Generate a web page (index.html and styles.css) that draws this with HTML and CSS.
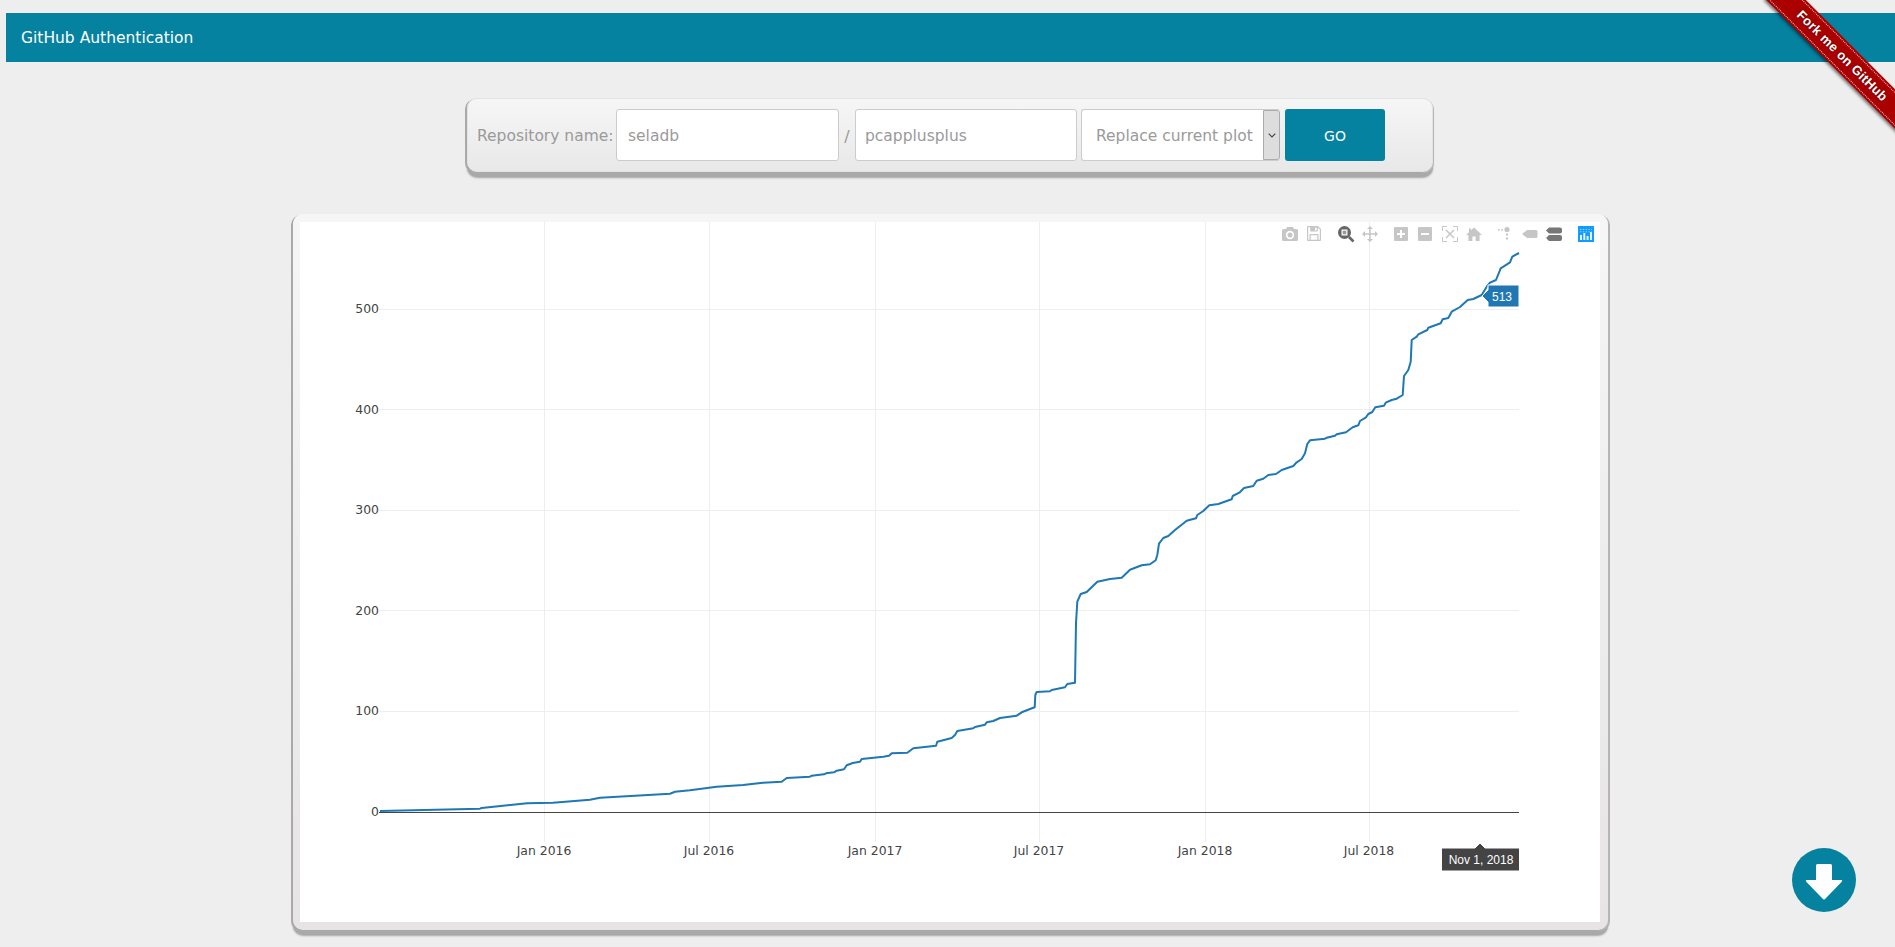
FILE: index.html
```html
<!DOCTYPE html>
<html lang="en">
<head>
<meta charset="utf-8">
<title>GitHub Authentication</title>
<link rel="stylesheet" href="styles.css">
</head>
<body>
<header class="topbar"><a class="topbar-link">GitHub Authentication</a></header>

<div class="ribbon-clip"><a class="ribbon"><span class="ribbon-text">Fork me on GitHub</span></a></div>

<section class="search-row">
  <form class="search-panel">
    <label class="repo-label">Repository name:</label>
    <input class="field field-owner" type="text" value="seladb">
    <span class="slash">/</span>
    <input class="field field-repo" type="text" value="pcapplusplus">
    <div class="picker">
      <span class="picker-text">Replace current plot</span>
      <span class="picker-arrow">
        <svg class="chevron" viewBox="0 0 8 5" width="8" height="5"><path d="M0.7 0.7 L4 4 L7.3 0.7" fill="none" stroke="#444" stroke-width="1.2"/></svg>
      </span>
    </div>
    <button class="go" type="button">GO</button>
  </form>
</section>

<section class="plot-row">
  <div class="plot-card">
    <svg class="plot" viewBox="300 222 1300 700" width="1300" height="700">
      <g class="grid">
        <path d="M544.5 222V842M709.5 222V842M875.5 222V842M1039.5 222V842M1205.5 222V842M1369.5 222V842"/>
        <path d="M379 309.5H1519M379 409.5H1519M379 510.5H1519M379 610.5H1519M379 711.5H1519"/>
      </g>
      <path class="zero" d="M379 812.5H1519"/>
      <g class="ytick">
        <text x="379" y="313">500</text>
        <text x="379" y="414">400</text>
        <text x="379" y="514">300</text>
        <text x="379" y="615">200</text>
        <text x="379" y="715">100</text>
        <text x="379" y="816">0</text>
      </g>
      <g class="xtick">
        <text x="544" y="855">Jan 2016</text>
        <text x="709" y="855">Jul 2016</text>
        <text x="875" y="855">Jan 2017</text>
        <text x="1039" y="855">Jul 2017</text>
        <text x="1205" y="855">Jan 2018</text>
        <text x="1369" y="855">Jul 2018</text>
      </g>
      <polyline class="trace" points="380,811 480,808.7 481.7,808 503,805.7 527,803.3 553,802.7 590,799.7 600,797.7 670,793.7 675,791.7 690,790.3 716.7,786.7 743,785 763,782.7 781.7,781.7 786.7,778 810,776.7 811.7,775.7 824,774.3 826,773.3 834,772.3 836.7,770.7 844,769.3 846.7,765.3 852.7,763 860,761.7 861.7,759 883.3,756.7 889,755.7 891.7,753.3 907.3,752.7 913.3,748.3 936,745.7 937.3,741.7 951.7,738 955,735 957.3,731 973.3,728.3 975,727 985,724.7 986.7,722.3 993.3,721 1000,718 1016.7,715.7 1021.7,712.3 1033.3,707.7 1034.7,707.3 1035.3,695 1036.7,692 1050,691.3 1051.7,690 1065,687.3 1067.3,684 1075,682.7 1076,623.3 1077.3,601.7 1080.7,594 1086.7,592 1097.3,581.7 1110,579 1121.7,577.7 1130,569.7 1141.7,565.3 1150,564.3 1155.7,560.3 1157.3,555 1159,543.7 1163.3,538 1168.3,536 1175,530 1186.7,520.7 1196,518.3 1197.3,515 1203.3,511 1209.3,505.3 1218.3,504 1226,501.3 1231.7,499.3 1232.7,496 1239.3,492.7 1244,488 1253.3,486 1256.7,480.7 1263.3,478.7 1268.3,475 1276,474 1281.7,470 1293.3,466 1296.7,462.3 1301.7,459 1305,453.3 1307.3,444 1310,440.3 1325,438.7 1326.7,437.7 1335,435.7 1336.7,434.3 1346,432.3 1352.7,427.3 1358.3,425.3 1360,421 1366,417.3 1368.3,414 1372.3,412 1375.3,407.3 1384,405.7 1385.7,402.7 1391.7,400 1396.7,398.7 1402.7,395 1404,376 1408.3,370 1410.7,361.7 1411.7,340 1416.7,336.7 1418.3,334.3 1427.3,330 1428.3,327.7 1440.7,323.3 1442.7,319.3 1448.3,318 1451.7,311.7 1460,307 1467.7,300 1473.3,299 1481.7,295 1486.7,286.7 1490,282.7 1496,280 1500.7,268.3 1510,262.3 1512.3,256.7 1519,253"/>

      <g class="hover">
        <path class="hover-y" d="M1482 296L1488 290V285H1519V307H1488V302Z"/>
        <text class="hover-text" x="1502" y="301">513</text>
        <path class="hover-x" d="M1480 843L1485 848H1519.5V871H1441.5V848H1475Z"/>
        <text class="hover-text" x="1481" y="864">Nov 1, 2018</text>
      </g>

      <g class="modebar">
        <path transform="translate(1282 227)" fill-rule="evenodd" d="M0 3.5A1.5 1.5 0 0 1 1.5 2H4L5 0H11L12 2H14.5A1.5 1.5 0 0 1 16 3.5V12.5A1.5 1.5 0 0 1 14.5 14H1.5A1.5 1.5 0 0 1 0 12.5ZM8 3.8A4.2 4.2 0 1 0 8 12.2A4.2 4.2 0 1 0 8 3.8ZM8 5.5A2.5 2.5 0 1 1 8 10.5A2.5 2.5 0 1 1 8 5.5Z"/>
        <path transform="translate(1307 226)" fill-rule="evenodd" d="M1 0H11L14 3V14A1 1 0 0 1 13 15H1A1 1 0 0 1 0 14V1A1 1 0 0 1 1 0ZM1.2 1.2V13.8H2.5V8H11.5V13.8H12.8V3.6L10.8 1.4V5.6H3.2V1.2ZM8 1.8V4.6H9.6V1.8ZM3.7 9.2V13.8H10.3V9.2Z"/>
        <g class="mode-active">
          <path transform="translate(1338 226)" fill-rule="evenodd" d="M6.5 0A6.5 6.5 0 1 1 6.5 13A6.5 6.5 0 1 1 6.5 0ZM3.5 3.5V9.5H9.5V3.5Z"/>
          <rect x="1342.7" y="230.7" width="3.6" height="3.6" class="mode-inner"/>
          <path class="mode-handle" d="M1349 237L1353.5 241.5"/>
        </g>
        <path transform="translate(1362 226)" d="M7.25 3H8.75V7.25H13V5L16 8L13 11V8.75H8.75V13H11L8 16L5 13H7.25V8.75H3V11L0 8L3 5V7.25H7.25V3H5L8 0L11 3H7.25Z"/>
        <path transform="translate(1394 227)" fill-rule="evenodd" d="M1 0H13A1 1 0 0 1 14 1V13A1 1 0 0 1 13 14H1A1 1 0 0 1 0 13V1A1 1 0 0 1 1 0ZM6 3V6H3V8H6V11H8V8H11V6H8V3Z"/>
        <path transform="translate(1418 227)" fill-rule="evenodd" d="M1 0H13A1 1 0 0 1 14 1V13A1 1 0 0 1 13 14H1A1 1 0 0 1 0 13V1A1 1 0 0 1 1 0ZM3 6V8H11V6Z"/>
        <g class="mode-auto" transform="translate(1442 226)">
          <path d="M.5 5V.5H5M11 .5H15.5V5M15.5 11V15.5H11M5 15.5H.5V11"/>
          <path class="mode-auto-x" d="M4 4L12 12M12 4L4 12"/>
        </g>
        <path transform="translate(1466 227)" d="M8 .5L16 8H13.6V14H9.6V9.5H6.4V14H2.4V8H0L3 5.2V1.5H5V3.3Z"/>
        <g transform="translate(1498 226)">
          <circle cx="9" cy="3.5" r="2.6"/>
          <rect x="0" y="3" width="1.6" height="1.6"/>
          <rect x="3.2" y="3" width="1.6" height="1.6"/>
          <rect x="8" y="7.5" width="2" height="2"/>
          <rect x="8" y="11.5" width="2" height="2"/>
        </g>
        <path transform="translate(1522 230)" d="M0 4L5 0H14A1.5 1.5 0 0 1 15.5 1.5V6.5A1.5 1.5 0 0 1 14 8H5Z"/>
        <path class="mode-dark" transform="translate(1546 227.5)" d="M3 0H14A2 2 0 0 1 16 2V4A2 2 0 0 1 14 6H3L0 3ZM3 7.5H14A2 2 0 0 1 16 9.5V11.5A2 2 0 0 1 14 13.5H3L0 10.5Z"/>
        <g transform="translate(1578 226)">
          <rect class="logo-bg" width="16" height="16"/>
          <path class="logo-bars" d="M2 9h2v5H2ZM5.3 7h2v7h-2ZM8.6 10h2v4h-2ZM12 6h2v8h-2Z"/>
          <path class="logo-dots" d="M2 3.5H14M2 5.8H14"/>
        </g>
      </g>
    </svg>
  </div>
</section>

<a class="scroll-down">
  <svg viewBox="0 0 64 64" width="64" height="64">
    <circle cx="32" cy="32" r="32" fill="#04829f"/>
    <path fill="#fff" d="M25.5 16H38.5A1.5 1.5 0 0 1 40 17.5V32H49.5A1 1 0 0 1 50 33.5L32.8 51.2A1.2 1.2 0 0 1 31.2 51.2L14 33.5A1 1 0 0 1 14.5 32H24V17.5A1.5 1.5 0 0 1 25.5 16Z"/>
  </svg>
</a>
</body>
</html>
```
FILE: styles.css
```css
* { box-sizing: border-box; }

html, body {
  margin: 0;
  height: 947px;
  overflow: hidden;
}

body {
  padding: 13px 0 0 6px;
  background: #eeeeee;
  font-family: "DejaVu Sans", "Noto Sans", sans-serif;
}

.topbar {
  display: flex;
  align-items: center;
  height: 49px;
  padding-left: 15px;
  background: #04829f;
}

.topbar-link {
  color: #ffffff;
  font-size: 15.5px;
}

.ribbon-clip {
  position: absolute;
  top: 0;
  right: 0;
  width: 150px;
  height: 150px;
  overflow: hidden;
}

.ribbon {
  position: absolute;
  left: 2px;
  top: 42px;
  width: 190px;
  height: 28px;
  padding: 2px 0;
  background: #aa0000;
  transform: rotate(45deg);
  box-shadow: 0 2px 3px rgba(0, 0, 0, 0.5);
}

.ribbon-text {
  display: block;
  height: 24px;
  text-align: center;
  color: #ffffff;
  font: bold 13px/22px "Liberation Sans", Arial, sans-serif;
  letter-spacing: 0.3px;
  border-top: 1px dotted rgba(255, 255, 255, 0.8);
  border-bottom: 1px dotted rgba(255, 255, 255, 0.8);
  text-shadow: 0 0 2px rgba(0, 0, 0, 0.6);
}

.search-row {
  display: flex;
  justify-content: center;
  margin-top: 36px;
  padding-right: 1px;
}

.search-panel {
  display: flex;
  align-items: center;
  width: 966px;
  height: 74px;
  padding: 0 9px;
  border: 1px solid #e2e2e2;
  border-radius: 10px;
  background: linear-gradient(#f6f6f6, #e8e8e8);
  box-shadow: -2px 1px 0 #a9a9a9, 1px 1px 0 #b8b8b8, 0 5px 0 #a9a9a9, 0 6px 2px rgba(0, 0, 0, 0.3);
}

.repo-label {
  width: 139px;
  flex: none;
  padding-top: 2px;
  font-size: 15.5px;
  white-space: nowrap;
  color: #9a9a9a;
}

.field {
  flex: none;
  height: 52px;
  padding-top: 2px;
  border: 1px solid #cccccc;
  border-radius: 3px;
  background: #ffffff;
  color: #9a9a9a;
  font: 15.5px "DejaVu Sans", "Noto Sans", sans-serif;
  outline: none;
}

.field-owner {
  width: 223px;
  padding-left: 11px;
}

.field-repo {
  width: 222px;
  padding-left: 9px;
}

.slash {
  width: 16px;
  flex: none;
  padding-top: 2px;
  text-align: center;
  font-size: 16px;
  color: #9a9a9a;
}

.picker {
  display: flex;
  flex: none;
  width: 199px;
  height: 52px;
  margin-left: 4px;
  border: 1px solid #cccccc;
  border-right: none;
  border-radius: 3px;
  background: #ffffff;
}

.picker-text {
  flex: 1;
  padding-left: 14px;
  line-height: 52px;
  font-size: 15.5px;
  white-space: nowrap;
  color: #9a9a9a;
}

.picker-arrow {
  display: flex;
  align-items: center;
  justify-content: center;
  flex: none;
  width: 17px;
  border: 1px solid #ababab;
  border-radius: 0 3px 3px 0;
  background: #dddddd;
}

.go {
  flex: none;
  width: 100px;
  height: 52px;
  padding-top: 2px;
  margin-left: 5px;
  border: none;
  border-radius: 3px;
  background: #04829f;
  color: #ffffff;
  font: 14px "DejaVu Sans", "Noto Sans", sans-serif;
}

.plot-row {
  display: flex;
  justify-content: center;
  margin-top: 42px;
}

.plot-card {
  width: 1315px;
  height: 716px;
  padding: 8px 8px 8px 7px;
  border-radius: 10px;
  background: linear-gradient(#f6f6f6, #e6e4e4);
  box-shadow: -2px 1px 0 #a9a9a9, 2px 1px 0 #b4b4b4, 0 5px 0 #a9a9a9, 0 6px 2px rgba(0, 0, 0, 0.3);
}

.plot {
  display: block;
  background: #ffffff;
}

.grid path {
  fill: none;
  stroke: #eeeeee;
  stroke-width: 1;
}

.zero {
  fill: none;
  stroke: #444444;
  stroke-width: 1;
}

.ytick text,
.xtick text {
  font: 12.4px "DejaVu Sans", sans-serif;
  fill: #444444;
}

.ytick text { text-anchor: end; }
.xtick text { text-anchor: middle; }

.trace {
  fill: none;
  stroke: #1f77b4;
  stroke-width: 2;
  stroke-linejoin: round;
}

.hover-y {
  fill: #1f77b4;
  stroke: #ffffff;
  stroke-width: 1;
}

.hover-x {
  fill: #444444;
  stroke: #ffffff;
  stroke-width: 1;
}

.hover-text {
  font: 12px "Liberation Sans", Arial, sans-serif;
  fill: #ffffff;
  text-anchor: middle;
}

.modebar { fill: #c6c6c6; }

.mode-active { fill: #666666; }
.mode-inner { fill: #999999; }
.mode-handle {
  fill: none;
  stroke: #666666;
  stroke-width: 2.6;
}

.mode-auto path {
  fill: none;
  stroke: #c6c6c6;
  stroke-width: 1;
}

.mode-auto .mode-auto-x { stroke-width: 1.5; }

.mode-dark { fill: #777777; }

.logo-bg { fill: #119dff; }
.logo-bars { fill: #e6f4ff; }
.logo-dots {
  fill: none;
  stroke: #8fd0ff;
  stroke-width: 1;
  stroke-dasharray: 1.4 1.4;
}

.scroll-down {
  position: absolute;
  left: 1792px;
  top: 848px;
  width: 64px;
  height: 64px;
}
```
